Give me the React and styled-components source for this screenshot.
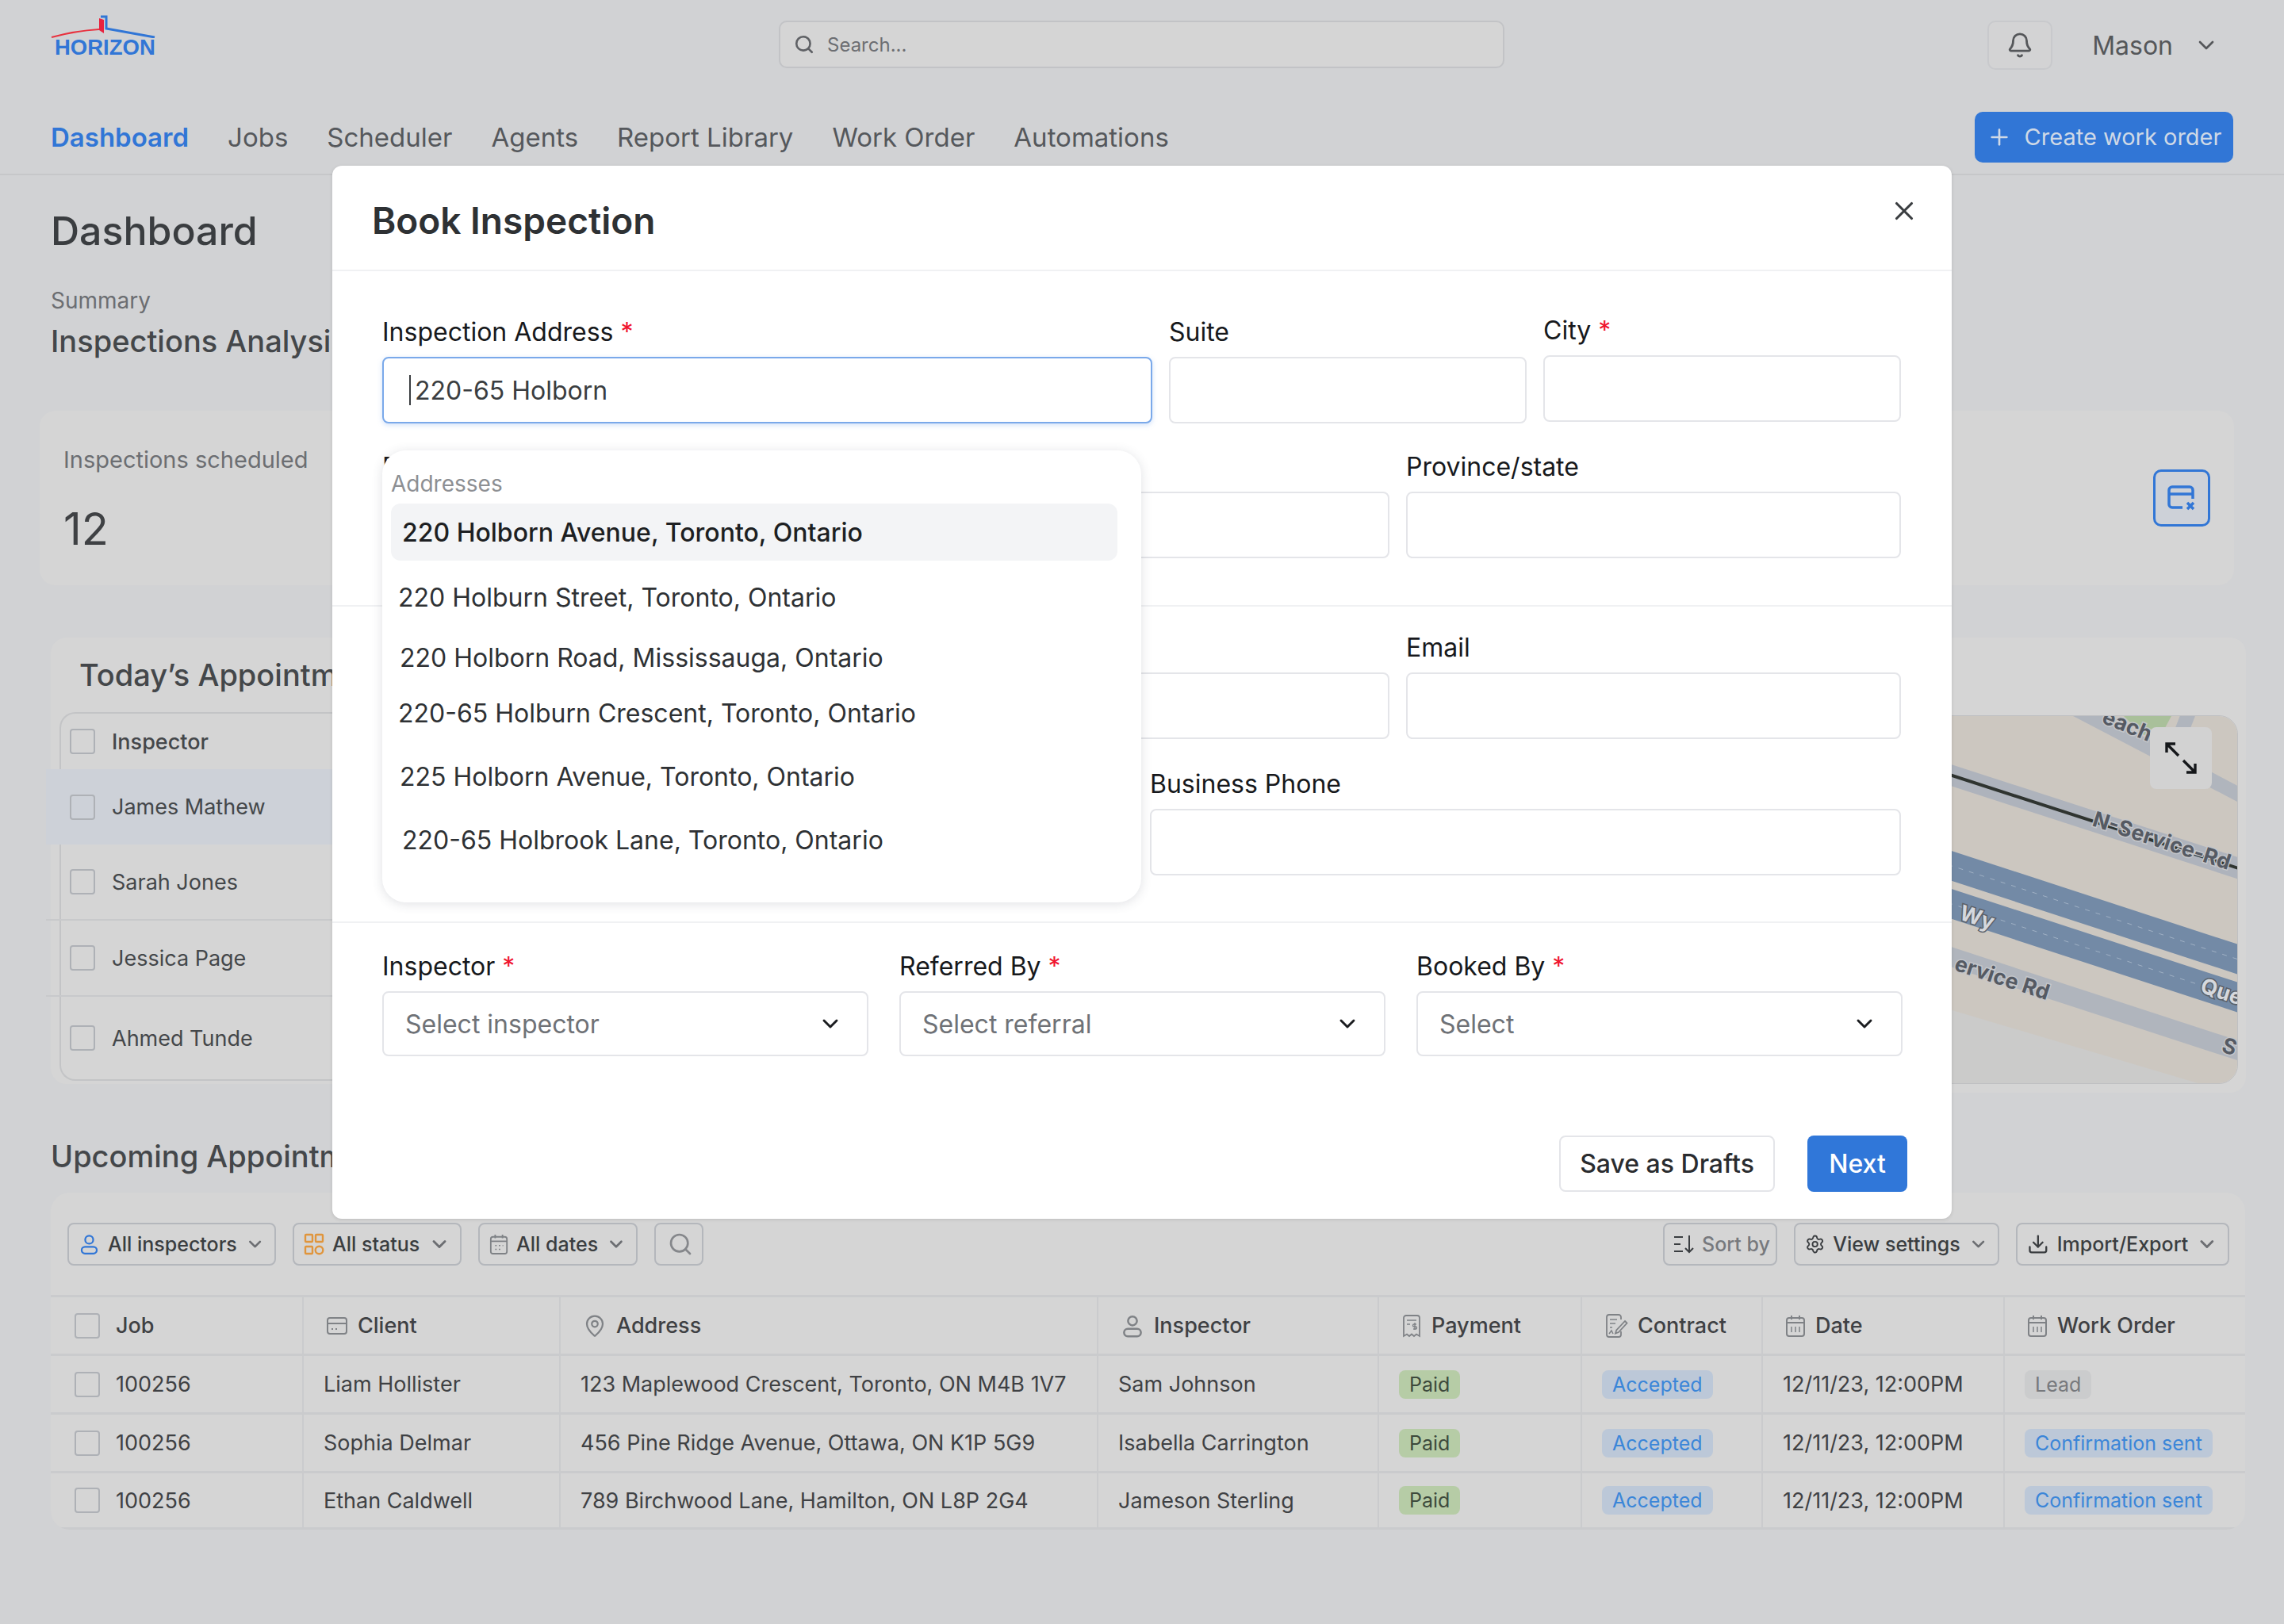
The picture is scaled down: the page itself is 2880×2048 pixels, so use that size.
import React from 'react';
import styled, { createGlobalStyle } from 'styled-components';
import { Bell, ChevronDown, Plus, Search, X, Settings, Download, MapPin } from 'lucide-react';

const GlobalStyle = createGlobalStyle`
  html, body { margin: 0; padding: 0; width: 2880px; height: 2048px; overflow: hidden; background: #d1d2d4; }
  * { box-sizing: border-box; }
  body { font-family: Inter, "Noto Sans", sans-serif; color: #3a3d40; }
`;

const Page = styled.div`
  position: relative;
  width: 2880px;
  height: 2048px;
  background: #d1d2d4;
`;

// top bar
const TopBar = styled.header`
  display: flex;
  align-items: flex-start;
  height: 114px;
  padding: 26px 82px 0 64px;
`;
const Logo = styled.div`
  width: 918px;
  margin-top: -8px;
  display: flex;
  flex-direction: column;
`;
const LogoText = styled.div`
  font-family: "Liberation Sans", Arial, sans-serif;
  font-weight: 700;
  font-size: 27.5px;
  line-height: 26px;
  color: #3176d6;
  margin: -1px 0 0 5px;
`;
const SearchBox = styled.div`
  width: 915px;
  height: 60px;
  display: flex;
  align-items: center;
  gap: 16px;
  padding-left: 17px;
  background: #d5d5d5;
  border: 2px solid #c2c3c6;
  border-radius: 10px;
  font-size: 24px;
  color: #6c6e72;
`;
const UserArea = styled.div`
  margin-left: auto;
  display: flex;
  align-items: center;
`;
const BellBox = styled.div`
  width: 82px;
  height: 62px;
  display: flex;
  align-items: center;
  justify-content: center;
  border: 2px solid #c8c9cc;
  background: #d3d3d4;
  border-radius: 10px;
  color: #55575a;
`;
const UserName = styled.span`
  font-size: 32px;
  color: #55575a;
  margin-left: 50px;
  margin-right: 26px;
`;

// nav
const NavBar = styled.nav`
  display: flex;
  align-items: center;
  height: 107px;
  padding: 12px 64px 0 64px;
  border-bottom: 2px solid #c6c7c9;
  gap: 49px;
`;
const NavItem = styled.a`
  font-size: 33px;
  font-weight: ${p => (p.$active ? 600 : 400)};
  color: ${p => (p.$active ? '#3176d6' : '#55585c')};
`;
const CreateButton = styled.button`
  margin-left: auto;
  width: 326px;
  height: 64px;
  display: flex;
  align-items: center;
  justify-content: center;
  gap: 16px;
  border: 0;
  border-radius: 10px;
  background: #3176d6;
  color: #cfd9e6;
  font-family: inherit;
  font-size: 29px;
`;

// dashboard flow
const Main = styled.main`
  display: flex;
  flex-direction: column;
  padding: 0 48px 0 64px;
`;
const PageTitle = styled.h1`
  margin: 40px 0 0;
  font-size: 50px;
  line-height: 60px;
  font-weight: 500;
  color: #3a3d40;
`;
const SummaryLabel = styled.div`
  margin-top: 42px;
  font-size: 28px;
  line-height: 32px;
  color: #6c6e72;
`;
const SectionTitle = styled.h2`
  margin: ${p => p.$top || 12}px 0 0;
  font-size: 38px;
  line-height: 46px;
  font-weight: 500;
  color: #44474a;
  white-space: nowrap;
`;
const StatCard = styled.section`
  margin: 65px 0 0 -14px;
  width: 2767px;
  height: 220px;
  background: #d5d5d5;
  border-radius: 20px;
  padding: 44px 30px 0;
  display: flex;
  justify-content: space-between;
`;
const StatLabel = styled.div`
  font-size: 29px;
  line-height: 36px;
  color: #6c6e72;
`;
const StatValue = styled.div`
  margin-top: 36px;
  font-size: 56px;
  line-height: 66px;
  color: #3f4144;
`;
const StatIcon = styled.div`
  width: 72px;
  height: 72px;
  margin-top: 30px;
  display: flex;
  align-items: center;
  justify-content: center;
  border: 3px solid #3176d6;
  border-radius: 10px;
  background: #cdd1d8;
`;

const AppointmentsRow = styled.div`
  display: flex;
  align-items: flex-start;
  margin-top: 66px;
`;
const AppointmentsCard = styled.section`
  width: 1136px;
  height: 563px;
  background: #d5d5d5;
  border-radius: 20px 0 0 20px;
  padding: 24px 0 0 11px;
`;
const CardTitle = styled.h3`
  margin: 0 0 24px 25px;
  font-size: 38px;
  line-height: 46px;
  font-weight: 500;
  color: #44474a;
  white-space: nowrap;
`;
const MiniTable = styled.div`
  border: 2px solid #c3c4c6;
  border-right: 0;
  border-radius: 20px 0 0 20px;
  height: 465px;
`;
const MiniRow = styled.div`
  display: flex;
  align-items: center;
  gap: 21px;
  height: ${p => p.$h}px;
  margin-left: ${p => (p.$wide ? -19 : 0)}px;
  padding-left: ${p => (p.$wide ? 30 : 11)}px;
  background: ${p => (p.$active ? '#cdd1d8' : 'transparent')};
  border-bottom: ${p => (p.$line ? '2px solid #c8c9cb' : '0')};
  font-size: 27px;
  font-weight: ${p => (p.$head ? 500 : 400)};
  color: #44474a;
`;
const Check = styled.span`
  flex: none;
  width: 32px;
  height: 32px;
  border: 2px solid #aeb1b6;
  border-radius: 4px;
`;
const MapCard = styled.section`
  flex: 1;
  height: 574px;
  background: #d5d5d5;
  border-radius: 0 20px 20px 0;
  padding: 98px 10px 0 0;
  display: flex;
  justify-content: flex-end;
`;
const MapFrame = styled.div`
  position: relative;
  width: 1422px;
  height: 465px;
  border-radius: 24px;
  overflow: hidden;
  border: 1px solid #bfc0c2;
  svg { display: block; }
`;
const ExpandButton = styled.div`
  position: absolute;
  top: 14px;
  right: 32px;
  width: 78px;
  height: 78px;
  border-radius: 8px;
  background: #d2d2d2;
  display: flex;
  align-items: center;
  justify-content: center;
`;

const TableCard = styled.section`
  margin-top: 23px;
  width: 2767px;
  height: 425px;
  background: #d5d5d5;
  border-radius: 24px;
  padding-top: 38px;
  overflow: hidden;
`;
const Toolbar = styled.div`
  display: flex;
  align-items: center;
  gap: 21px;
  padding: 0 20px 0 21px;
  height: 54px;
  margin-bottom: 37px;
`;
const Chip = styled.div`
  width: ${p => p.$w}px;
  height: 54px;
  flex: none;
  display: flex;
  align-items: center;
  gap: ${p => p.$gap || 10}px;
  padding-left: ${p => p.$pad || 12}px;
  border: 2px solid #b4b7bc;
  border-radius: 8px;
  font-size: 25px;
  font-weight: 500;
  color: ${p => (p.$muted ? '#77797d' : '#3a3d40')};
  white-space: nowrap;
  margin-left: ${p => (p.$push ? 'auto' : 0)};
  svg:last-child { margin-left: auto; margin-right: 12px; }
  svg:only-child { margin: 0; }
`;
const Grid = styled.div`
  display: grid;
  grid-template-columns: 317px 324px 678px 354px 256px 228px 305px 305px;
  height: 74px;
  border-top: 3px solid #cacbcd;
  &:last-child { border-bottom: 3px solid #cacbcd; }
`;
const Cell = styled.div`
  display: flex;
  align-items: center;
  gap: ${p => (p.$job ? 20 : 12)}px;
  padding-left: ${p => (p.$job ? 30 : p.$head ? 28 : 25)}px;
  border-left: ${p => (p.$job ? '0' : '2px solid #cacbcd')};
  font-size: 27px;
  font-weight: ${p => (p.$head ? 500 : 400)};
  color: #3f4144;
  white-space: nowrap;
`;
const TONES = {
  green: { bg: '#b6cca6', fg: '#3d4a3c' },
  blue: { bg: '#bcc8d8', fg: '#3b86d8' },
  grey: { bg: '#cbcccd', fg: '#77797d' },
};
const Badge = styled.span`
  height: 36px;
  display: inline-flex;
  align-items: center;
  padding: 0 13px;
  border-radius: 8px;
  font-size: 25px;
  background: ${p => TONES[p.$tone].bg};
  color: ${p => TONES[p.$tone].fg};
`;

// modal
const Modal = styled.div`
  position: absolute;
  top: 209px;
  left: 419px;
  width: 2042px;
  height: 1328px;
  background: #fff;
  border-radius: 12px;
  box-shadow: 0 1px 4px rgba(0, 0, 0, 0.12);
  display: flex;
  flex-direction: column;
`;
const ModalHeader = styled.div`
  height: 133px;
  display: flex;
  justify-content: space-between;
  align-items: flex-start;
  padding: 42px 41px 0 50px;
  border-bottom: 2px solid #f0f1f3;
`;
const ModalTitle = styled.h2`
  margin: 0;
  font-size: 46px;
  line-height: 54px;
  font-weight: 600;
  color: #2e3134;
`;
const CloseButton = styled.div`
  margin-top: -4px;
  color: #3a3d40;
  svg { display: block; }
`;
const FormSection = styled.div`
  height: ${p => p.$h}px;
  padding: ${p => p.$top}px 64px 0 63px;
  border-bottom: ${p => (p.$line ? '2px solid #f0f1f3' : '0')};
`;
const FormRow = styled.div`
  display: flex;
  align-items: flex-start;
  gap: ${p => p.$gap || 21}px;
  margin-top: ${p => p.$top || 0}px;
`;
const Field = styled.div`
  width: ${p => p.$w}px;
  flex: none;
  margin-top: ${p => p.$shift || 0}px;
`;
const Label = styled.label`
  display: block;
  height: 40px;
  margin-bottom: 11px;
  font-size: 32px;
  line-height: 40px;
  font-weight: 400;
  color: #17191c;
  white-space: nowrap;
`;
const Req = styled.span`
  color: #f0142f;
  margin-left: 9px;
`;
const Input = styled.div`
  position: relative;
  height: 84px;
  display: flex;
  align-items: center;
  padding-left: 32px;
  border: 2px solid ${p => (p.$focus ? '#7aa9ea' : '#e4e5e9')};
  border-radius: 8px;
  background: #fff;
  box-shadow: ${p => (p.$focus ? '0 2px 6px rgba(122, 169, 234, 0.35)' : 'none')};
  font-size: 32px;
  color: #3a3d40;
`;
const Caret = styled.span`
  width: 2px;
  height: 38px;
  margin-right: 5px;
  background: #3a3d40;
`;
const SelectBox = styled.div`
  height: 82px;
  display: flex;
  align-items: center;
  justify-content: space-between;
  padding: 0 30px 0 27px;
  border: 2px solid #e4e5e9;
  border-radius: 8px;
  font-size: 32px;
  color: #6f7277;
  svg { color: #1b1d20; }
`;
const ModalFooter = styled.div`
  display: flex;
  justify-content: flex-end;
  gap: 41px;
  padding: 0 56px 0 0;
  margin-top: auto;
  margin-bottom: 34px;
`;
const FooterButton = styled.button`
  height: 71px;
  width: ${p => p.$w}px;
  border-radius: 8px;
  font-family: inherit;
  font-size: 32px;
  font-weight: 500;
  background: ${p => (p.$primary ? '#3077d9' : '#fff')};
  color: ${p => (p.$primary ? '#fff' : '#2a2c2f')};
  border: ${p => (p.$primary ? '0' : '2px solid #e4e5e9')};
`;

// address suggestions sit on top of the form
const Dropdown = styled.div`
  position: absolute;
  top: 359px;
  left: 63px;
  width: 957px;
  height: 570px;
  padding: 24px 30px 0 11px;
  background: #fff;
  border-radius: 30px;
  box-shadow: 0 2px 14px rgba(60, 70, 90, 0.16);
`;
const DropdownLabel = styled.div`
  height: 43px;
  font-size: 28px;
  line-height: 36px;
  color: #8d8f93;
`;
const Option = styled.div`
  height: ${p => p.$h}px;
  display: flex;
  align-items: center;
  padding-left: ${p => p.$indent}px;
  border-radius: 12px;
  font-size: 32px;
  font-weight: ${p => (p.$active ? 500 : 400)};
  color: ${p => (p.$active ? '#1d1f22' : '#2e3134')};
  background: ${p => (p.$active ? '#f3f4f6' : 'transparent')};
  white-space: nowrap;
`;

// icons
const PersonIcon = ({ color = '#7f8286', size = 30 }) => (
  <svg width={size} height={size} viewBox="0 0 24 24" fill="none" stroke={color} strokeWidth="2">
    <circle cx="12" cy="7" r="4.5" />
    <rect x="3.5" y="15" width="17" height="7.5" rx="3.75" />
  </svg>
);
const StatusIcon = () => (
  <svg width="26" height="28" viewBox="0 0 26 28" fill="none" strokeWidth="2.4" stroke="#e0953c">
    <rect x="2" y="2" width="9" height="9" rx="1" />
    <rect x="15" y="2" width="9" height="9" rx="1" />
    <rect x="2" y="17" width="9" height="9" rx="1" />
    <circle cx="19.5" cy="21.5" r="4.8" />
  </svg>
);
const CalendarIcon = ({ blue }) => (
  <svg width="26" height="30" viewBox="0 0 26 30" fill="none" stroke="#7f8286" strokeWidth="2">
    <rect x="2" y="5" width="22" height="23" rx="3" />
    <path d="M2 11h22M8 2v5M18 2v5" />
    {blue ? (
      <path d="M8 17h2M13 17h2M18 17h1M8 22h2M13 22h2" strokeWidth="1.6" />
    ) : (
      <path d="M8 16v7M13 16v7M18 16v7" strokeWidth="1.5" />
    )}
  </svg>
);
const ClientIcon = () => (
  <svg width="28" height="26" viewBox="0 0 28 26" fill="none" stroke="#7f8286" strokeWidth="2">
    <rect x="2" y="3" width="24" height="20" rx="3" />
    <path d="M2 10h24M7 17h2M12 17h2" />
  </svg>
);
const ReceiptIcon = () => (
  <svg width="26" height="30" viewBox="0 0 26 30" fill="none" stroke="#7f8286" strokeWidth="1.8">
    <path d="M3 5a3 3 0 0 1 3-3h14a3 3 0 0 1 3 3v23l-4-2.5-3 2.5-3-2.5-3 2.5-3-2.5-4 2.5z" />
    <path d="M7 8h12M7 13h4M17 11v9M19 13h-3a1.5 1.5 0 0 0 0 3h2a1.5 1.5 0 0 1 0 3h-3" strokeWidth="1.4" />
  </svg>
);
const ContractIcon = () => (
  <svg width="30" height="32" viewBox="0 0 30 32" fill="none" stroke="#7f8286" strokeWidth="1.8">
    <path d="M21 8V5a3 3 0 0 0-3-3H6a3 3 0 0 0-3 3v22a3 3 0 0 0 3 3h12a3 3 0 0 0 3-3v-4" />
    <path d="M7 8h9M7 13h7M7 18h3M6 26l3-4 2 4" strokeWidth="1.5" />
    <path d="M26 10l2.5 2.5L18 24l-4 1.5 1.2-4z" />
  </svg>
);
const SortIcon = () => (
  <svg width="26" height="26" viewBox="0 0 26 26" fill="none" stroke="#3a3d40" strokeWidth="2">
    <path d="M1 4h11M1 13h8M1 22h11M20 2v21M15 18l5 5 5-5" />
  </svg>
);
const Chevron = ({ size = 28, color = '#6c6e72', width = 2.5 }) => (
  <ChevronDown size={size} color={color} strokeWidth={width} />
);

const MapDrawing = () => (
  <svg width="1422" height="465" viewBox="1400 902 1422 465">
    <rect x="1400" y="902" width="1422" height="465" fill="#ccc7c0" />
    <polygon points="2400,1255 2777,1367 2400,1367" fill="#cbcbca" />
    <polygon points="2677,902 2737,902 2722,930 2700,925" fill="#a9c09a" />
    <path d="M2760 895 L2735 960" stroke="#b0b5bd" strokeWidth="18" />
    <path d="M2600 885 L2830 1005" stroke="#b0b5bd" strokeWidth="18" />
    <path d="M2362 945 L2840 1100" stroke="#aeb3bc" strokeWidth="26" />
    <path d="M2362 945 L2840 1100" stroke="#2f3430" strokeWidth="4" />
    <path d="M2362 1059 L2840 1215" stroke="#738aa6" strokeWidth="36" />
    <path d="M2362 1107 L2840 1263" stroke="#738aa6" strokeWidth="36" />
    <path d="M2362 1059 L2840 1215" stroke="#a0b1c5" strokeWidth="1" strokeDasharray="6 8" />
    <path d="M2362 1107 L2840 1263" stroke="#a0b1c5" strokeWidth="1" strokeDasharray="6 8" />
    <path d="M2362 1174 L2840 1330" stroke="#b0b5bd" strokeWidth="24" />
    <MapLabel x={2648} y={910} angle={22}>each</MapLabel>
    <MapLabel x={2636} y={1040} angle={18}>N-Service-Rd</MapLabel>
    <MapLabel x={2468} y={1158} angle={18} light>Wy</MapLabel>
    <MapLabel x={2462} y={1222} angle={18}>ervice Rd</MapLabel>
    <MapLabel x={2772} y={1250} angle={18} light>Que</MapLabel>
    <MapLabel x={2799} y={1325} angle={18}>S</MapLabel>
  </svg>
);
const MapText = styled.text`
  font-family: Inter, sans-serif;
  font-weight: 700;
  font-size: 27px;
  paint-order: stroke;
  stroke-width: 3px;
  stroke: ${p => (p.$light ? '#5a6068' : '#c4c6ca')};
  fill: ${p => (p.$light ? '#d5d8dd' : '#555a63')};
`;
function MapLabel({ x, y, angle, light, children }) {
  return (
    <MapText x={x} y={y} $light={light} transform={`rotate(${angle} ${x} ${y})`}>
      {children}
    </MapText>
  );
}

const jobs = [
  { client: 'Liam Hollister', address: '123 Maplewood Crescent, Toronto, ON M4B 1V7', inspector: 'Sam Johnson', order: 'Lead', tone: 'grey' },
  { client: 'Sophia Delmar', address: '456 Pine Ridge Avenue, Ottawa, ON K1P 5G9', inspector: 'Isabella Carrington', order: 'Confirmation sent', tone: 'blue' },
  { client: 'Ethan Caldwell', address: '789 Birchwood Lane, Hamilton, ON L8P 2G4', inspector: 'Jameson Sterling', order: 'Confirmation sent', tone: 'blue' },
];

const addresses = [
  { text: '220 Holborn Avenue, Toronto, Ontario', h: 72, indent: 14, active: true },
  { text: '220 Holburn Street, Toronto, Ontario', h: 92, indent: 9 },
  { text: '220 Holborn Road, Mississauga, Ontario', h: 60, indent: 11 },
  { text: '220-65 Holburn Crescent, Toronto, Ontario', h: 80, indent: 9 },
  { text: '225 Holborn Avenue, Toronto, Ontario', h: 80, indent: 11 },
  { text: '220-65 Holbrook Lane, Toronto, Ontario', h: 80, indent: 14 },
];

function TextField({ label, required, w, shift }) {
  return (
    <Field $w={w} $shift={shift}>
      <Label>{label}{required && <Req>*</Req>}</Label>
      <Input />
    </Field>
  );
}

function SelectField({ label, placeholder }) {
  return (
    <Field $w={613}>
      <Label>{label}<Req>*</Req></Label>
      <SelectBox>
        {placeholder}
        <ChevronDown size={32} strokeWidth={2.2} />
      </SelectBox>
    </Field>
  );
}

export default function App() {
  return (
    <Page>
      <GlobalStyle />
      <TopBar>
        <Logo>
          <svg width="134" height="30" viewBox="0 0 134 30" fill="none">
            <path d="M1 29 Q 30 21 61 19" stroke="#e8323f" strokeWidth="2" />
            <polygon points="61,5 67,7 67,24 61,20" fill="#e8233f" />
            <path d="M63 3 H70 V18 L131 29" stroke="#3176d6" strokeWidth="3" />
          </svg>
          <LogoText>HORIZON</LogoText>
        </Logo>
        <SearchBox>
          <Search size={26} strokeWidth={2.4} color="#5f6165" />
          Search...
        </SearchBox>
        <UserArea>
          <BellBox><Bell size={34} strokeWidth={2} /></BellBox>
          <UserName>Mason</UserName>
          <ChevronDown size={32} color="#55575a" strokeWidth={2} />
        </UserArea>
      </TopBar>

      <NavBar>
        <NavItem $active>Dashboard</NavItem>
        <NavItem>Jobs</NavItem>
        <NavItem>Scheduler</NavItem>
        <NavItem>Agents</NavItem>
        <NavItem>Report Library</NavItem>
        <NavItem>Work Order</NavItem>
        <NavItem>Automations</NavItem>
        <CreateButton><Plus size={32} strokeWidth={2} />Create work order</CreateButton>
      </NavBar>

      <Main>
        <PageTitle>Dashboard</PageTitle>
        <SummaryLabel>Summary</SummaryLabel>
        <SectionTitle>Inspections Analysis</SectionTitle>

        <StatCard>
          <div>
            <StatLabel>Inspections scheduled</StatLabel>
            <StatValue>12</StatValue>
          </div>
          <StatIcon>
            <svg width="38" height="36" viewBox="0 0 38 36" fill="none" stroke="#3176d6" strokeWidth="3.5">
              <path d="M20 30H7a4 4 0 0 1-4-4V8a4 4 0 0 1 4-4h22a4 4 0 0 1 4 4v11" />
              <path d="M3 13h30M26 24l8 8M34 24l-8 8" />
            </svg>
          </StatIcon>
        </StatCard>

        <AppointmentsRow>
          <AppointmentsCard>
            <CardTitle>Today’s Appointments</CardTitle>
            <MiniTable>
              <MiniRow $h={70} $head><Check />Inspector</MiniRow>
              <MiniRow $h={95} $wide $active><Check />James Mathew</MiniRow>
              <MiniRow $h={96} $wide $line><Check />Sarah Jones</MiniRow>
              <MiniRow $h={96} $wide $line><Check />Jessica Page</MiniRow>
              <MiniRow $h={104} $wide><Check />Ahmed Tunde</MiniRow>
            </MiniTable>
          </AppointmentsCard>
          <MapCard>
            <MapFrame>
              <MapDrawing />
              <ExpandButton>
                <svg width="44" height="44" viewBox="0 0 44 44" fill="none" stroke="#15171a" strokeWidth="3.4">
                  <path d="M19 19L4 4M4 15V4h11M25 25l15 15M40 29v11H29" />
                </svg>
              </ExpandButton>
            </MapFrame>
          </MapCard>
        </AppointmentsRow>

        <SectionTitle $top={57}>Upcoming Appointments</SectionTitle>

        <TableCard>
          <Toolbar>
            <Chip $w={263}><PersonIcon color="#3176d6" />All inspectors<Chevron /></Chip>
            <Chip $w={213}><StatusIcon />All status<Chevron /></Chip>
            <Chip $w={201}><CalendarIcon blue />All dates<Chevron /></Chip>
            <Chip $w={62} $pad={15}><Search size={32} color="#85878b" strokeWidth={2} /></Chip>
            <Chip $w={144} $muted $push $pad={11}><SortIcon />Sort by</Chip>
            <Chip $w={259}><Settings size={28} color="#3a3d40" strokeWidth={1.8} />View settings<Chevron /></Chip>
            <Chip $w={269}><Download size={28} color="#3a3d40" strokeWidth={2} />Import/Export<Chevron /></Chip>
          </Toolbar>

          <Grid>
            <Cell $job $head><Check />Job</Cell>
            <Cell $head><ClientIcon />Client</Cell>
            <Cell $head><MapPin size={30} color="#7f8286" strokeWidth={1.8} />Address</Cell>
            <Cell $head><PersonIcon />Inspector</Cell>
            <Cell $head><ReceiptIcon />Payment</Cell>
            <Cell $head><ContractIcon />Contract</Cell>
            <Cell $head><CalendarIcon />Date</Cell>
            <Cell $head><CalendarIcon />Work Order</Cell>
          </Grid>
          {jobs.map(job => (
            <Grid key={job.client}>
              <Cell $job><Check />100256</Cell>
              <Cell>{job.client}</Cell>
              <Cell>{job.address}</Cell>
              <Cell>{job.inspector}</Cell>
              <Cell><Badge $tone="green">Paid</Badge></Cell>
              <Cell><Badge $tone="blue">Accepted</Badge></Cell>
              <Cell>12/11/23, 12:00PM</Cell>
              <Cell><Badge $tone={job.tone}>{job.order}</Badge></Cell>
            </Grid>
          ))}
        </TableCard>
      </Main>

      <Modal>
        <ModalHeader>
          <ModalTitle>Book Inspection</ModalTitle>
          <CloseButton><X size={38} strokeWidth={2} /></CloseButton>
        </ModalHeader>

        <FormSection $h={423} $top={57} $line>
          <FormRow>
            <Field $w={971}>
              <Label>Inspection Address<Req>*</Req></Label>
              <Input $focus><Caret />220-65 Holborn</Input>
            </Field>
            <TextField label="Suite" w={451} />
            <TextField label="City" required w={451} shift={-2} />
          </FormRow>
          <FormRow $top={35}>
            <TextField label="Postal code" w={1270} />
            <TextField label="Province/state" w={624} />
          </FormRow>
        </FormSection>

        <FormSection $h={399} $top={32} $line>
          <FormRow>
            <TextField label="Contact name" w={1270} />
            <TextField label="Email" w={624} />
          </FormRow>
          <FormRow $top={37}>
            <TextField label="Home Phone" w={947} />
            <TextField label="Business Phone" w={947} />
          </FormRow>
        </FormSection>

        <FormSection $h={170} $top={35}>
          <FormRow $gap={39}>
            <SelectField label="Inspector" placeholder="Select inspector" />
            <SelectField label="Referred By" placeholder="Select referral" />
            <SelectField label="Booked By" placeholder="Select" />
          </FormRow>
        </FormSection>

        <ModalFooter>
          <FooterButton $w={272}>Save as Drafts</FooterButton>
          <FooterButton $w={126} $primary>Next</FooterButton>
        </ModalFooter>

        <Dropdown>
          <DropdownLabel>Addresses</DropdownLabel>
          {addresses.map(a => (
            <Option key={a.text} $h={a.h} $indent={a.indent} $active={a.active}>{a.text}</Option>
          ))}
        </Dropdown>
      </Modal>
    </Page>
  );
}
